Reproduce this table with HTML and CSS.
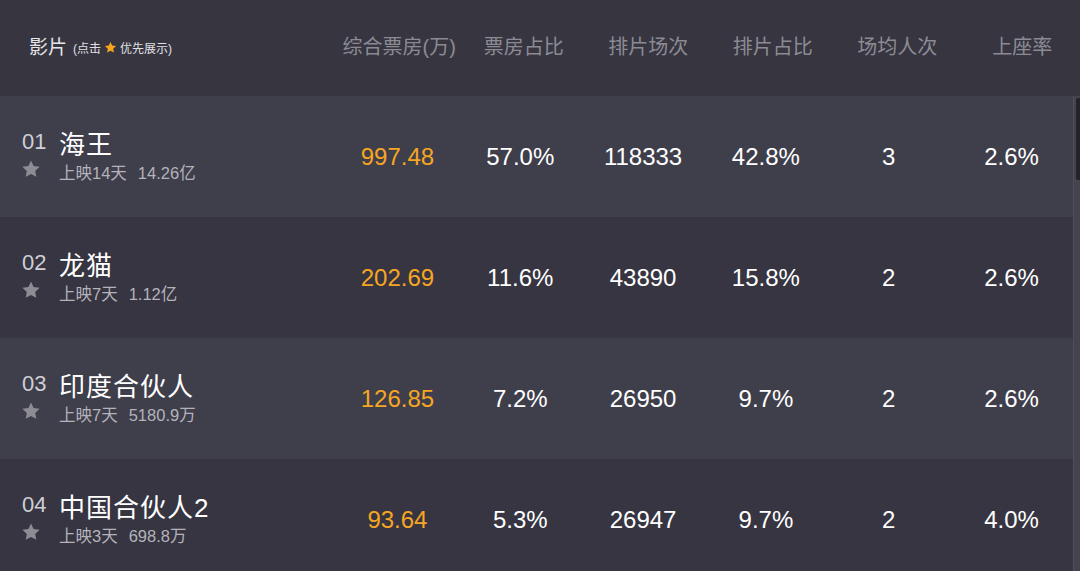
FILE: index.html
```html
<!DOCTYPE html>
<html lang="zh-CN">
<head>
<meta charset="utf-8">
<title>票房</title>
<link rel="stylesheet" href="styles.css">
</head>
<body>
<div class="board">
  <div class="head">
    <div class="h-film"><span class="h-title">影片</span><span class="h-note">(点击 <svg class="h-star" viewBox="0 0 24 24"><path d="M12 1.8l3.1 6.6 7.2.9-5.3 5 1.4 7.1L12 17.9l-6.4 3.5L7 14.3l-5.3-5 7.2-.9z"/></svg> 优先展示)</span></div>
    <div class="h-col">综合票房(万)</div>
    <div class="h-col">票房占比</div>
    <div class="h-col">排片场次</div>
    <div class="h-col">排片占比</div>
    <div class="h-col">场均人次</div>
    <div class="h-col h-last">上座率</div>
  </div>
  <div class="body">
    <div class="rows">
      <div class="row odd">
        <div class="film">
          <div class="line1"><span class="idx">01</span><span class="name">海王</span></div>
          <div class="line2"><svg class="star" viewBox="0 0 24 24"><path d="M12 1.8l3.1 6.6 7.2.9-5.3 5 1.4 7.1L12 17.9l-6.4 3.5L7 14.3l-5.3-5 7.2-.9z"/></svg><span class="sub">上映14天</span><span class="sub">14.26亿</span></div>
        </div>
        <div class="cell gold">997.48</div>
        <div class="cell">57.0%</div>
        <div class="cell">118333</div>
        <div class="cell">42.8%</div>
        <div class="cell">3</div>
        <div class="cell">2.6%</div>
      </div>
      <div class="row even">
        <div class="film">
          <div class="line1"><span class="idx">02</span><span class="name">龙猫</span></div>
          <div class="line2"><svg class="star" viewBox="0 0 24 24"><path d="M12 1.8l3.1 6.6 7.2.9-5.3 5 1.4 7.1L12 17.9l-6.4 3.5L7 14.3l-5.3-5 7.2-.9z"/></svg><span class="sub">上映7天</span><span class="sub">1.12亿</span></div>
        </div>
        <div class="cell gold">202.69</div>
        <div class="cell">11.6%</div>
        <div class="cell">43890</div>
        <div class="cell">15.8%</div>
        <div class="cell">2</div>
        <div class="cell">2.6%</div>
      </div>
      <div class="row odd">
        <div class="film">
          <div class="line1"><span class="idx">03</span><span class="name">印度合伙人</span></div>
          <div class="line2"><svg class="star" viewBox="0 0 24 24"><path d="M12 1.8l3.1 6.6 7.2.9-5.3 5 1.4 7.1L12 17.9l-6.4 3.5L7 14.3l-5.3-5 7.2-.9z"/></svg><span class="sub">上映7天</span><span class="sub">5180.9万</span></div>
        </div>
        <div class="cell gold">126.85</div>
        <div class="cell">7.2%</div>
        <div class="cell">26950</div>
        <div class="cell">9.7%</div>
        <div class="cell">2</div>
        <div class="cell">2.6%</div>
      </div>
      <div class="row even">
        <div class="film">
          <div class="line1"><span class="idx">04</span><span class="name">中国合伙人2</span></div>
          <div class="line2"><svg class="star" viewBox="0 0 24 24"><path d="M12 1.8l3.1 6.6 7.2.9-5.3 5 1.4 7.1L12 17.9l-6.4 3.5L7 14.3l-5.3-5 7.2-.9z"/></svg><span class="sub">上映3天</span><span class="sub">698.8万</span></div>
        </div>
        <div class="cell gold">93.64</div>
        <div class="cell">5.3%</div>
        <div class="cell">26947</div>
        <div class="cell">9.7%</div>
        <div class="cell">2</div>
        <div class="cell">4.0%</div>
      </div>
    </div>
    <div class="scrollbar"><div class="thumb"></div></div>
  </div>
</div>
</body>
</html>
```
FILE: styles.css
```css
* { box-sizing: border-box; }
html, body { margin: 0; padding: 0; }
body {
  width: 1080px;
  height: 571px;
  overflow: hidden;
  background: #363541;
  font-family: "Liberation Sans", "Noto Sans CJK SC", sans-serif;
}
.board { display: flex; flex-direction: column; }
.head {
  display: flex;
  align-items: center;
  height: 96px;
  padding-bottom: 6px;
  background: #363540;
}
.h-film {
  width: 337px;
  flex: none;
  padding-left: 29px;
  display: flex;
  align-items: center;
  gap: 6px;
}
.h-title { font-size: 19px; color: #e6e6ea; }
.h-note { font-size: 12px; color: #e0e0e4; display: flex; align-items: center; gap: 2px; padding-top: 4px; }
.h-star { width: 13px; height: 13px; fill: #f5a51e; margin: 0 1px; }
.h-col {
  width: 124.5px;
  flex: none;
  text-align: center;
  font-size: 20px;
  color: #8c8b94;
  white-space: nowrap;
}
.h-col.h-last { flex: 1; width: auto; padding-left: 5px; }
.body { display: flex; height: 475px; }
.rows { flex: 1; display: flex; flex-direction: column; }
.row { display: flex; height: 121px; flex-shrink: 0; }
.row.odd { background: #3f3e4b; }
.row.even { background: #363541; }
.film {
  width: 336px;
  padding-left: 22px;
  padding-top: 31px;
}
.line1 { display: flex; align-items: center; height: 30px; }
.idx { width: 37px; font-size: 22px; color: #cfcfd6; }
.name { font-size: 26px; color: #ffffff; letter-spacing: 1px; }
.line2 { display: flex; align-items: center; height: 22px; margin-top: 4px; }
.star { width: 20px; height: 20px; fill: #8d8c94; margin-left: -1px; margin-right: 18px; margin-top: -6px; }
.sub { font-size: 16.5px; color: #b4b3bb; margin-right: 11px; }
.cell {
  flex: 1;
  display: flex;
  align-items: center;
  justify-content: center;
  font-size: 24px;
  color: #ffffff;
}
.cell.gold { color: #f6a623; }
.scrollbar {
  width: 7px;
  background: #44434f;
  border-left: 1px solid #4f4e5a;
}
.thumb {
  margin-top: 2px;
  margin-left: 2px;
  height: 82px;
  background: #24232b;
  border-radius: 2px 0 0 2px;
}
```
